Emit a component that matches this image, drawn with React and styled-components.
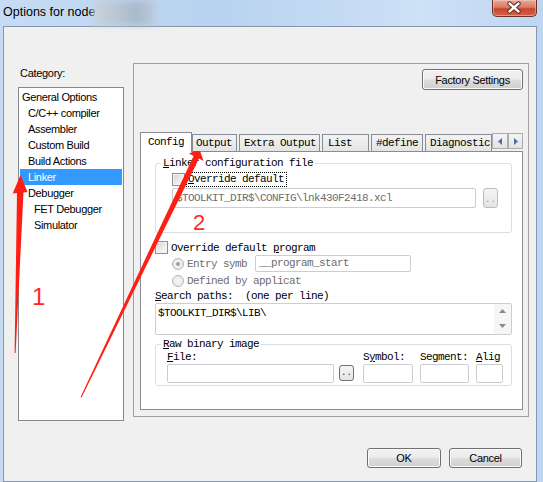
import React from 'react';
import styled, { createGlobalStyle } from 'styled-components';

const SYS = `"Liberation Sans", Arial, sans-serif`;
const MONO = `"Liberation Mono", "Courier New", monospace`;

const categories = [
  { name: 'General Options', level: 0 },
  { name: 'C/C++ compiler', level: 1 },
  { name: 'Assembler', level: 1 },
  { name: 'Custom Build', level: 1 },
  { name: 'Build Actions', level: 1 },
  { name: 'Linker', level: 1, selected: true },
  { name: 'Debugger', level: 1 },
  { name: 'FET Debugger', level: 2 },
  { name: 'Simulator', level: 2 },
];

const tabs = [
  { label: 'Config', w: 52, pad: 7, active: true },
  { label: 'Output', w: 45, pad: 3 },
  { label: 'Extra Output', w: 81, pad: 4 },
  { label: 'List', w: 47, pad: 5 },
  { label: '#define', w: 52, pad: 4 },
  { label: 'Diagnostic', w: 67, pad: 4 },
];

const App = () => {
  return (
    <>
      <GlobalStyle />
      <Window>
        <TitleBar>
          <Title>Options for node</Title>
          <Smudge />
          <CloseButton>
            <svg width="45" height="17" viewBox="0 0 45 17">
              <path d="M18 4.5 L27 12.5 M27 4.5 L18 12.5" stroke="#5a2a22" strokeWidth="4.6" strokeLinecap="round" />
              <path d="M18 4.5 L27 12.5 M27 4.5 L18 12.5" stroke="#ffffff" strokeWidth="2.6" strokeLinecap="round" />
            </svg>
          </CloseButton>
        </TitleBar>

        <Body>
          <Main>
            <LeftColumn>
              <CategoryLabel>Category:</CategoryLabel>
              <ListBox>
                {categories.map(item => (
                  <ListItem key={item.name} $level={item.level} $selected={item.selected}>
                    {item.name}
                  </ListItem>
                ))}
              </ListBox>
            </LeftColumn>

            <Panel>
              <FactoryButton>Factory Settings</FactoryButton>
              <TabControl>
                <TabStrip>
                  <TabList>
                    {tabs.map(tab => (
                      <Tab key={tab.label} $w={tab.w} $pad={tab.pad} $active={tab.active}>
                        {tab.label}
                      </Tab>
                    ))}
                  </TabList>
                  <TabArrow $w={16}>
                    <svg width="6" height="7" viewBox="0 0 6 7">
                      <path d="M5 0 L1 3.5 L5 7 Z" fill="#4a6fa8" />
                    </svg>
                  </TabArrow>
                  <TabArrow $w={15}>
                    <svg width="6" height="7" viewBox="0 0 6 7">
                      <path d="M1 0 L5 3.5 L1 7 Z" fill="#4a6fa8" />
                    </svg>
                  </TabArrow>
                </TabStrip>

                <Page>
                  <Group $mt={5} $pb={24}>
                    <Legend>
                      <u>L</u>inker configuration file
                    </Legend>
                    <CheckRow $ml={16}>
                      <CheckBox />
                      <FocusLabel>
                        <u>O</u>verride default
                      </FocusLabel>
                    </CheckRow>
                    <PathRow>
                      <TextBox $w={304} $h={20} $muted>
                        $TOOLKIT_DIR$\CONFIG\lnk430F2418.xcl
                      </TextBox>
                      <DotsButton $w={15} $h={20} $disabled>
                        ..
                      </DotsButton>
                    </PathRow>
                  </Group>

                  <CheckRow $ml={0} $mt={7}>
                    <CheckBox />
                    <PlainLabel>
                      Override default <u>p</u>rogram
                    </PlainLabel>
                  </CheckRow>
                  <RadioRow $h={17}>
                    <Radio $checked />
                    <RadioLabel $w={64}>Entry symb</RadioLabel>
                    <TextBox $w={156} $h={17} $muted $ml={4}>
                      __program_start
                    </TextBox>
                  </RadioRow>
                  <RadioRow $h={16} $mt={1}>
                    <Radio />
                    <RadioLabel $w={118}>Defined by applicat</RadioLabel>
                  </RadioRow>

                  <SearchLabel>
                    <u>S</u>earch paths:  (one per line)
                  </SearchLabel>
                  <PathBox>
                    <PathText>$TOOLKIT_DIR$\LIB\</PathText>
                    <ScrollBar>
                      <svg width="7" height="4" viewBox="0 0 7 4">
                        <path d="M0 4 L3.5 0 L7 4 Z" fill="#8a8a8a" />
                      </svg>
                      <svg width="7" height="4" viewBox="0 0 7 4">
                        <path d="M0 0 L3.5 4 L7 0 Z" fill="#8a8a8a" />
                      </svg>
                    </ScrollBar>
                  </PathBox>

                  <Group $mt={3} $pb={2}>
                    <Legend>
                      <u>R</u>aw binary image
                    </Legend>
                    <BinaryRow>
                      <BinaryCol $w={167}>
                        <ColLabel>
                          <u>F</u>ile:
                        </ColLabel>
                        <TextBox $w={167} $h={19} />
                      </BinaryCol>
                      <BinaryCol $w={15} $ml={5}>
                        <ColLabel />
                        <DotsButton $w={15} $h={16} $mt={1}>
                          ..
                        </DotsButton>
                      </BinaryCol>
                      <BinaryCol $w={50} $ml={9}>
                        <ColLabel>
                          S<u>y</u>mbol:
                        </ColLabel>
                        <TextBox $w={50} $h={19} />
                      </BinaryCol>
                      <BinaryCol $w={49} $ml={7}>
                        <ColLabel>
                          Se<u>g</u>ment:
                        </ColLabel>
                        <TextBox $w={49} $h={19} />
                      </BinaryCol>
                      <BinaryCol $w={27} $ml={7}>
                        <ColLabel>
                          <u>A</u>lig
                        </ColLabel>
                        <TextBox $w={27} $h={19} />
                      </BinaryCol>
                    </BinaryRow>
                  </Group>
                </Page>
              </TabControl>
            </Panel>
          </Main>

          <Footer>
            <DialogButton $w={74}>OK</DialogButton>
            <DialogButton $w={73}>Cancel</DialogButton>
          </Footer>
        </Body>

        {/* red hand-drawn annotations lying over the dialog */}
        <Annotations width="543" height="482" viewBox="0 0 543 482">
          <polygon
            points="20.5,175 27.5,192 23.5,192.5 15.6,353 14.6,353 17,193 12.7,193.5"
            fill="#ff1e14"
          />
          <polygon
            points="199.3,149 203.6,161 199,158.5 81.6,397.4 80.6,396.9 193.6,155.9 189,153.4"
            fill="#ff1e14"
          />
        </Annotations>
        <Mark $x={32} $y={285} $size={24}>1</Mark>
        <Mark $x={193} $y={212} $size={22}>2</Mark>
      </Window>
    </>
  );
};

export default App;

const GlobalStyle = createGlobalStyle`
  html, body {
    margin: 0;
    padding: 0;
    background: #bcd5ef;
    overflow: hidden;
  }
  * {
    box-sizing: border-box;
  }
`;

const Window = styled.div`
  position: relative;
  width: 543px;
  height: 482px;
  overflow: hidden;
  display: flex;
  flex-direction: column;
  font-family: ${SYS};
  background: linear-gradient(90deg, #c6dcf4 0%, #b8d2ef 40%, #cde1f7 78%, #bdd6f1 100%);
`;

const TitleBar = styled.div`
  height: 26px;
  flex: none;
  display: flex;
  align-items: flex-start;
  padding-left: 3px;
`;

const Title = styled.div`
  font-size: 12.5px;
  line-height: 24px;
  color: #000;
  white-space: nowrap;
`;

const Smudge = styled.div`
  width: 62px;
  height: 24px;
  margin: 1px 0 0 -2px;
  background: linear-gradient(90deg, #c9d3dd 0%, #b6c4d1 45%, #a7b9cb 70%, #bccbd9 100%);
  filter: blur(3px);
`;

const CloseButton = styled.div`
  margin-left: auto;
  margin-right: 6px;
  width: 45px;
  height: 17px;
  border: 1px solid #6b3129;
  border-top: none;
  border-radius: 0 0 5px 5px;
  background: linear-gradient(#e9a899 0%, #dc7b66 45%, #c8452d 55%, #d5624a 100%);
  box-shadow: inset 0 0 0 1px rgba(255, 220, 210, 0.45);
  display: flex;

  svg {
    display: block;
    margin: -1px 0 0 -1px;
  }
`;

const Body = styled.div`
  flex: 1;
  margin: 0 6px 0 3px;
  display: flex;
  flex-direction: column;
  background: #f0f0f0;
  border: 1px solid #8497ad;
`;

const Main = styled.div`
  display: flex;
  align-items: flex-start;
  gap: 9px;
  padding: 36px 0 0 14px;
`;

const LeftColumn = styled.div`
  display: flex;
  flex-direction: column;
`;

const CategoryLabel = styled.div`
  margin: 4px 0 0 2px;
  font-size: 11px;
  line-height: 13px;
  letter-spacing: -0.3px;
  color: #000;
`;

const ListBox = styled.div`
  margin-top: 7px;
  width: 106px;
  height: 334px;
  padding-top: 1px;
  background: #fff;
  border: 1px solid #828790;
`;

const ListItem = styled.div`
  height: 16px;
  margin: 0 1px;
  padding-left: ${({ $level }) => 2 + $level * 6}px;
  font-size: 11px;
  line-height: 16px;
  letter-spacing: -0.35px;
  white-space: nowrap;
  color: ${({ $selected }) => ($selected ? '#fff' : '#000')};
  background: ${({ $selected }) => ($selected ? '#3399ff' : 'transparent')};
`;

const Panel = styled.div`
  width: 396px;
  height: 354px;
  padding: 5px 5px 6px 6px;
  border: 1px solid #a0a0a0;
  display: flex;
  flex-direction: column;
`;

const Button = styled.button`
  padding: 0;
  font-family: ${SYS};
  font-size: 11px;
  letter-spacing: -0.3px;
  color: #000;
  border: 1px solid #707070;
  border-radius: 3px;
  background: linear-gradient(#f2f2f2 0%, #ebebeb 48%, #dddddd 52%, #cfcfcf 100%);
  box-shadow: inset 0 0 0 1px #fbfbfb;
`;

const FactoryButton = styled(Button)`
  align-self: flex-end;
  width: 101px;
  height: 21px;
`;

const DialogButton = styled(Button)`
  width: ${({ $w }) => $w}px;
  height: 20px;
`;

const TabControl = styled.div`
  margin-top: auto;
  width: 383px;
  display: flex;
  flex-direction: column;
`;

const TabStrip = styled.div`
  position: relative;
  z-index: 1;
  height: 20px;
  margin-bottom: -1px;
  display: flex;
  align-items: flex-end;
`;

const TabList = styled.div`
  width: 352px;
  height: 20px;
  overflow: hidden;
  display: flex;
  align-items: flex-end;
`;

const Tab = styled.div`
  flex: none;
  width: ${({ $w }) => $w}px;
  height: ${({ $active }) => ($active ? 20 : 17)}px;
  margin: 0 ${({ $active }) => ($active ? 0 : 2)}px ${({ $active }) => ($active ? 0 : 1)}px 0;
  padding-left: ${({ $pad }) => $pad}px;
  border: 1px solid #898c95;
  border-bottom: none;
  background: ${({ $active }) => ($active ? '#fff' : 'linear-gradient(#f3f3f3, #e4e4e4)')};
  font-family: ${MONO};
  font-size: 11px;
  letter-spacing: -0.6px;
  line-height: ${({ $active }) => ($active ? 18 : 16)}px;
  white-space: nowrap;
  overflow: hidden;
  color: #000;
`;

const TabArrow = styled.div`
  flex: none;
  width: ${({ $w }) => $w}px;
  height: 16px;
  margin-bottom: 3px;
  border: 1px solid #adadad;
  background: linear-gradient(#f4f4f4, #e2e2e2);
  display: flex;
  align-items: center;
  justify-content: center;
`;

const Page = styled.div`
  height: 259px;
  padding: 0 10px 0 14px;
  background: #fff;
  border: 1px solid #898c95;
  display: flex;
  flex-direction: column;
  font-family: ${MONO};
  font-size: 11px;
  letter-spacing: -0.6px;
  line-height: 12px;
  color: #000;
`;

const Group = styled.fieldset`
  margin: ${({ $mt }) => $mt}px 0 0 0;
  padding: 0 0 ${({ $pb }) => $pb}px 0;
  min-width: 0;
  border: 1px solid #d5dfe5;
  border-radius: 3px;
`;

const Legend = styled.legend`
  margin-left: 5px;
  padding: 0 2px;
  line-height: 12px;
  white-space: nowrap;
`;

const CheckRow = styled.div`
  display: flex;
  align-items: center;
  height: 15px;
  margin: ${({ $mt }) => $mt || 3}px 0 0 ${({ $ml }) => $ml}px;
`;

const CheckBox = styled.span`
  flex: none;
  width: 13px;
  height: 13px;
  border: 1px solid #8e8f8f;
  background: linear-gradient(135deg, #cfd1d4 0%, #eeeeee 60%, #f8f8f8 100%);
  box-shadow: inset 0 0 0 1px #f4f4f4;
`;

const FocusLabel = styled.span`
  margin-left: 1px;
  padding: 0 2px 0 1px;
  border: 1px dotted #000;
  line-height: 13px;
  white-space: nowrap;
`;

const PlainLabel = styled.span`
  margin-left: 3px;
  white-space: nowrap;
`;

const PathRow = styled.div`
  display: flex;
  gap: 7px;
  margin: 1px 0 0 16px;
`;

const TextBox = styled.div`
  flex: none;
  width: ${({ $w }) => $w}px;
  height: ${({ $h }) => $h}px;
  margin-left: ${({ $ml }) => $ml || 0}px;
  padding-left: 3px;
  border: 1px solid #cacdd2;
  border-radius: 2px;
  background: #fff;
  color: ${({ $muted }) => ($muted ? '#6d6d6d' : '#000')};
  line-height: ${({ $h }) => $h - 2}px;
  white-space: nowrap;
  overflow: hidden;
`;

const DotsButton = styled.div`
  flex: none;
  width: ${({ $w }) => $w}px;
  height: ${({ $h }) => $h}px;
  margin-top: ${({ $mt }) => $mt || 0}px;
  border: 1px solid ${({ $disabled }) => ($disabled ? '#b9bdc1' : '#707070')};
  border-radius: 3px;
  background: linear-gradient(#f5f5f5, #e4e4e4);
  color: ${({ $disabled }) => ($disabled ? '#9a9a9a' : '#333')};
  font-size: 9px;
  letter-spacing: 0;
  line-height: 9px;
  display: flex;
  align-items: flex-end;
  justify-content: center;
  padding-bottom: 2px;
`;

const RadioRow = styled.div`
  display: flex;
  align-items: center;
  height: ${({ $h }) => $h}px;
  margin: ${({ $mt }) => $mt || 0}px 0 0 17px;
`;

const Radio = styled.span`
  flex: none;
  width: 12px;
  height: 12px;
  border-radius: 50%;
  border: 1px solid #b4b4b4;
  background: radial-gradient(circle at 50% 50%, #f6f6f6 0%, #e6e6e6 100%);
  display: flex;
  align-items: center;
  justify-content: center;

  &::after {
    content: '';
    width: 4px;
    height: 4px;
    border-radius: 50%;
    background: ${({ $checked }) => ($checked ? '#a2a2a2' : 'transparent')};
  }
`;

const RadioLabel = styled.span`
  flex: none;
  width: ${({ $w }) => $w}px;
  margin-left: 3px;
  white-space: nowrap;
  color: #6d6d6d;
`;

const SearchLabel = styled.div`
  margin-top: 1px;
  height: 13px;
  line-height: 13px;
  white-space: pre;
`;

const PathBox = styled.div`
  height: 32px;
  display: flex;
  border: 1px solid #cbcfd4;
  border-radius: 2px;
`;

const PathText = styled.div`
  flex: 1;
  padding: 3px 0 0 2px;
`;

const ScrollBar = styled.div`
  width: 17px;
  background: #f6f6f6;
  display: flex;
  flex-direction: column;
  align-items: center;
  justify-content: space-between;
  padding: 5px 0 6px;
`;

const BinaryRow = styled.div`
  display: flex;
  margin: 1px 0 0 11px;
`;

const BinaryCol = styled.div`
  flex: none;
  width: ${({ $w }) => $w}px;
  margin-left: ${({ $ml }) => $ml || 0}px;
  display: flex;
  flex-direction: column;
`;

const ColLabel = styled.div`
  height: 13px;
  line-height: 12px;
  white-space: nowrap;
`;

const Footer = styled.div`
  margin-top: auto;
  display: flex;
  justify-content: flex-end;
  gap: 8px;
  padding: 0 14px 13px 0;
`;

const Annotations = styled.svg`
  position: absolute;
  left: 0;
  top: 0;
  pointer-events: none;
`;

const Mark = styled.span`
  position: absolute;
  left: ${({ $x }) => $x}px;
  top: ${({ $y }) => $y}px;
  font-family: ${SYS};
  font-size: ${({ $size }) => $size}px;
  line-height: ${({ $size }) => $size}px;
  color: #ff2a22;
`;
